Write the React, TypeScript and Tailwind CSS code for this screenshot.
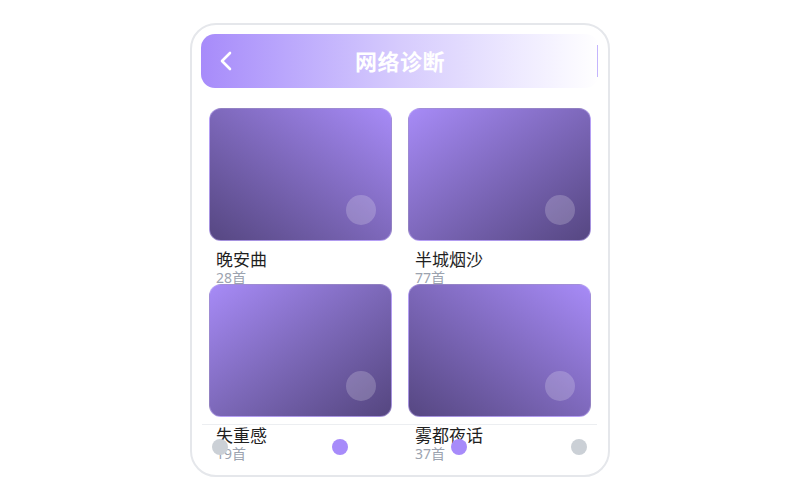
import React from "react";

type Playlist = {
  id: number;
  name: string;
  count: number;
  gradient: string;
};

const playlists: Playlist[] = [
  { id: 1, name: "晚安曲", count: 28, gradient: "bg-gradient-to-bl from-[#a78bf7] to-[#564782]" },
  { id: 2, name: "半城烟沙", count: 77, gradient: "bg-gradient-to-br from-[#a78bf7] to-[#564782]" },
  { id: 3, name: "失重感", count: 19, gradient: "bg-gradient-to-br from-[#a78bf7] via-[#7c68b8] to-[#554680]" },
  { id: 4, name: "雾都夜话", count: 37, gradient: "bg-gradient-to-bl from-[#a78bf7] to-[#564782]" },
];

const tabs = [false, true, true, false];

function BackIcon() {
  return (
    <svg width="14" height="20" viewBox="0 0 14 20" fill="none">
      <path d="M11 2 L3 10 L11 18" stroke="white" strokeWidth="2.6" strokeLinecap="round" strokeLinejoin="round" />
    </svg>
  );
}

function PlaylistCard({ item }: { item: Playlist }) {
  return (
    <div className="h-[160px]">
      <div className={`relative h-[133px] rounded-[12px] border border-[#c9b8fb]/50 ${item.gradient}`}>
        {/* play button placeholder */}
        <div className="absolute right-[15px] bottom-[15px] w-[30px] h-[30px] rounded-full bg-white/20" />
      </div>
      <div className="pl-[7px] mt-[9px]">
        <div className="text-[17px] leading-[20px] text-[#1f1f1f]">{item.name}</div>
        <div className="text-[14px] leading-[16px] text-[#9ca3af]">{item.count}首</div>
      </div>
    </div>
  );
}

export default function App() {
  return (
    <div
      className="w-full h-[500px] bg-white flex items-center justify-center"
      style={{ fontFamily: '"Noto Sans", "Noto Sans CJK SC", sans-serif' }}
    >
      <div className="relative w-[420px] h-[454px] rounded-[26px] border-2 border-[#e5e7eb] bg-white p-[9px] overflow-hidden">
        {/* Header */}
        <div className="h-[54px] rounded-[14px] bg-gradient-to-r from-[#a78bfa] via-[#d6cbfd] to-white grid grid-cols-[1fr_auto_1fr] items-center">
          <div className="pl-[18px] flex items-center">
            <BackIcon />
          </div>
          <h1 className="text-[22px] font-bold text-white tracking-[0.5px]">网络诊断</h1>
          <div className="flex justify-end pr-[1px]">
            <div className="w-px h-[32px] bg-[#c4b5fd]" />
          </div>
        </div>

        {/* Playlists */}
        <div className="grid grid-cols-2 gap-x-[16px] gap-y-[16px] px-[8px] pt-[20px]">
          {playlists.map((p) => (
            <PlaylistCard key={p.id} item={p} />
          ))}
        </div>

        {/* Bottom tab bar */}
        <div className="absolute left-[10px] right-[11px] bottom-[7px] h-[44px] border-t border-[#eceef1] flex items-center justify-between px-[10px]">
          {tabs.map((active, i) => (
            <div
              key={i}
              className={`w-[16px] h-[16px] rounded-full ${active ? "bg-[#a78bfa]" : "bg-[#cbd0d6]"}`}
            />
          ))}
        </div>
      </div>
    </div>
  );
}
